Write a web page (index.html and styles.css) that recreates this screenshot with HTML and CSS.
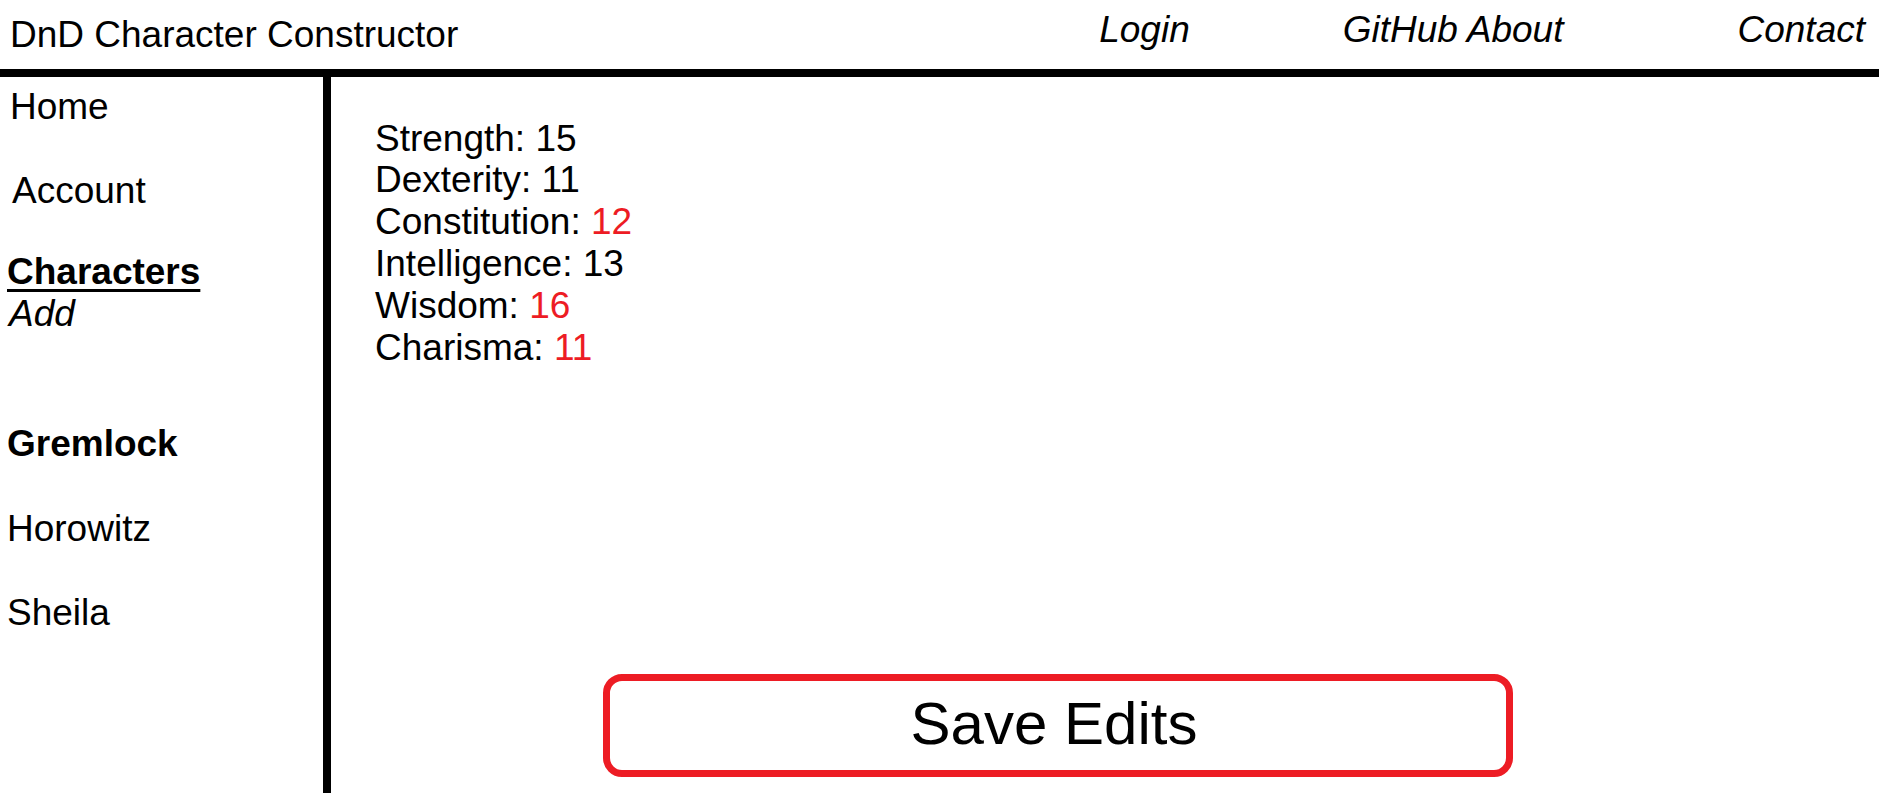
FILE: index.html
```html
<!DOCTYPE html>
<html lang="en">
<head>
<meta charset="utf-8">
<title>DnD Character Constructor</title>
<link rel="stylesheet" href="styles.css">
</head>
<body>
  <header class="topbar">
    <div class="brand">DnD Character Constructor</div>
    <nav class="topnav">
      <a class="topnav-link login">Login</a>
      <a class="topnav-link github">GitHub About</a>
      <a class="topnav-link contact">Contact</a>
    </nav>
  </header>
  <div class="layout">
    <aside class="sidebar">
      <a class="side-link side-home">Home</a>
      <a class="side-link side-account">Account</a>
      <a class="side-link side-characters">Characters</a>
      <a class="side-link side-add">Add</a>
      <a class="side-link side-char side-active">Gremlock</a>
      <a class="side-link side-char side-horowitz">Horowitz</a>
      <a class="side-link side-char side-sheila">Sheila</a>
    </aside>
    <main class="content">
      <div class="stats">
        <div class="stat">Strength: 15</div>
        <div class="stat">Dexterity: 11</div>
        <div class="stat">Constitution: <span class="changed">12</span></div>
        <div class="stat">Intelligence: 13</div>
        <div class="stat">Wisdom: <span class="changed">16</span></div>
        <div class="stat">Charisma: <span class="changed">11</span></div>
      </div>
      <button class="save-btn" type="button">Save Edits</button>
    </main>
  </div>
</body>
</html>
```
FILE: styles.css
```css
* {
  box-sizing: border-box;
}

html, body {
  margin: 0;
  padding: 0;
}

body {
  height: 100vh;
  display: flex;
  flex-direction: column;
  font-family: "Liberation Sans", Arial, sans-serif;
  font-size: 37px;
  color: #000;
  background: #fff;
  overflow: hidden;
}

a {
  color: inherit;
  text-decoration: none;
}

.topbar {
  display: flex;
  align-items: flex-start;
  height: 77px;
  border-bottom: 8px solid #000;
  flex-shrink: 0;
}

.brand {
  padding-left: 10px;
  padding-top: 14px;
  line-height: normal;
}

.topnav {
  margin-left: auto;
  display: flex;
  padding-top: 9px;
  padding-right: 14px;
  font-style: italic;
  line-height: normal;
}

.login {
  margin-right: 153px;
}

.github {
  margin-right: 174px;
}

.layout {
  flex: 1;
  display: flex;
  min-height: 0;
}

.sidebar {
  width: 331px;
  flex-shrink: 0;
  border-right: 8px solid #000;
  display: flex;
  flex-direction: column;
  align-items: flex-start;
  line-height: normal;
  padding-top: 9px;
}

.side-link {
  padding-left: 7px;
}

.side-home {
  padding-left: 10px;
}

.side-account {
  padding-left: 12px;
  margin-top: 42px;
}

.side-characters {
  margin-top: 38.5px;
  font-weight: bold;
  text-decoration: underline;
  text-decoration-thickness: 3px;
  text-underline-offset: 5px;
}

.side-add {
  font-style: italic;
  padding-left: 9px;
}

.side-active {
  font-weight: bold;
  margin-top: 88.5px;
}

.side-horowitz {
  margin-top: 43px;
}

.side-sheila {
  margin-top: 42px;
}

.content {
  flex: 1;
  display: flex;
  flex-direction: column;
  align-items: flex-start;
  padding-left: 44px;
  padding-top: 40.5px;
}

.stats {
  line-height: 41.9px;
}

.changed {
  color: #ed1c24;
}

.save-btn {
  margin-top: auto;
  margin-bottom: 16px;
  margin-left: 228px;
  width: 910px;
  height: 103px;
  border: 7px solid #ed1c24;
  border-radius: 19px;
  background: #fff;
  font-family: "Liberation Sans", Arial, sans-serif;
  font-size: 60px;
  color: #000;
  display: flex;
  align-items: center;
  justify-content: center;
  padding: 0 8px 4px 0;
}
```
